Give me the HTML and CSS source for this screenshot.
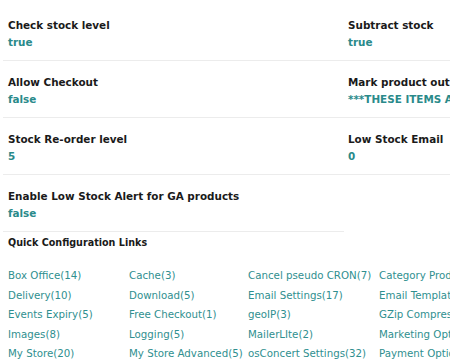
FILE: index.html
```html
<!DOCTYPE html>
<html>
<head>
<meta charset="utf-8">
<link rel="stylesheet" href="styles.css">
</head>
<body>
<div class="page">
  <div class="settings">
    <div class="cell left"><div class="label">Check stock level</div><div class="value">true</div></div>
    <div class="cell right"><div class="label">Subtract stock</div><div class="value">true</div></div>
    <div class="cell left"><div class="label">Allow Checkout</div><div class="value">false</div></div>
    <div class="cell right"><div class="label">Mark product out of stock</div><div class="value">***THESE ITEMS ARE SOLD OUT***</div></div>
    <div class="cell left"><div class="label">Stock Re-order level</div><div class="value">5</div></div>
    <div class="cell right"><div class="label">Low Stock Email</div><div class="value">0</div></div>
    <div class="cell left"><div class="label">Enable Low Stock Alert for GA products</div><div class="value">false</div></div>
    <div class="cell empty"></div>
  </div>
  <h3 class="quick-title">Quick Configuration Links</h3>
  <div class="links">
    <a class="link" href="#">Box Office(14)</a>
    <a class="link" href="#">Cache(3)</a>
    <a class="link" href="#">Cancel pseudo CRON(7)</a>
    <a class="link" href="#">Category Products(4)</a>
    <a class="link" href="#">Delivery(10)</a>
    <a class="link" href="#">Download(5)</a>
    <a class="link" href="#">Email Settings(17)</a>
    <a class="link" href="#">Email Templates(6)</a>
    <a class="link" href="#">Events Expiry(5)</a>
    <a class="link" href="#">Free Checkout(1)</a>
    <a class="link" href="#">geoIP(3)</a>
    <a class="link" href="#">GZip Compression(2)</a>
    <a class="link" href="#">Images(8)</a>
    <a class="link" href="#">Logging(5)</a>
    <a class="link" href="#">MailerLIte(2)</a>
    <a class="link" href="#">Marketing Options(9)</a>
    <a class="link" href="#">My Store(20)</a>
    <a class="link" href="#">My Store Advanced(5)</a>
    <a class="link" href="#">osConcert Settings(32)</a>
    <a class="link" href="#">Payment Options(3)</a>
  </div>
</div>
</body>
</html>
```
FILE: styles.css
```css
html, body {
  margin: 0;
  padding: 0;
  background: #ffffff;
  overflow: hidden;
}
body {
  width: 450px;
  height: 360px;
  font-family: "DejaVu Sans", Verdana, sans-serif;
  font-size: 10.4px;
  color: #1a1a1a;
}
.page {
  width: 450px;
  height: 360px;
  overflow: hidden;
  padding-top: 4px;
  box-sizing: border-box;
}
.settings {
  display: grid;
  grid-template-columns: 341px 200px;
  margin-left: 3px;
}
.cell {
  height: 34px;
  border-bottom: 1px solid #ececec;
  padding: 13px 0 9px 5px;
  white-space: nowrap;
  overflow: hidden;
}
.cell.right {
  padding-left: 4px;
}
.cell.empty {
  border-bottom: none;
}
.label {
  font-weight: bold;
  line-height: 17px;
  color: #1a1a1a;
}
.value {
  font-weight: bold;
  line-height: 17px;
  color: #2a8a8a;
}
.quick-title {
  margin: 0;
  padding: 4px 0 0 8px;
  font-size: 9.6px;
  font-weight: bold;
  line-height: 14px;
  color: #1a1a1a;
}
.links {
  display: grid;
  grid-template-columns: 121px 119px 131px 150px;
  padding: 16px 0 0 8px;
}
.link {
  font-size: 10.25px;
  color: #2f8f8f;
  text-decoration: none;
  line-height: 19.5px;
  white-space: nowrap;
  overflow: hidden;
}
```
